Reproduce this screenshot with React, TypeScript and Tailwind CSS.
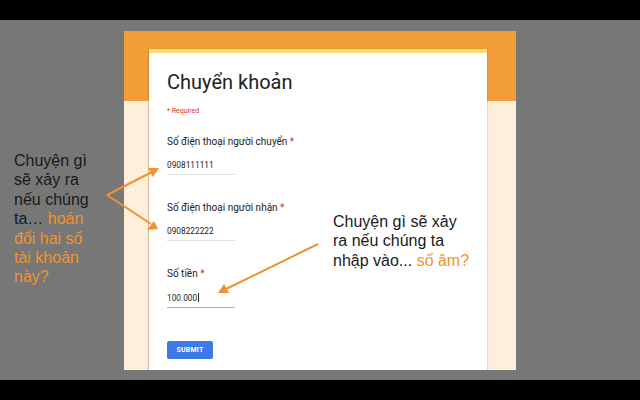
import React from 'react';

const roboto = { fontFamily: 'Roboto, "Noto Sans", sans-serif' };

function Field({ label, value, active }: { label: string; value: string; active?: boolean }) {
  return (
    <div className="flex flex-col">
      <div className="text-[10px] leading-[14px] text-[#202124]">
        {label} <span className="text-[#d93025]">*</span>
      </div>
      <div
        className={
          'mt-[11px] w-[68px] border-b pb-[4px] text-[8.3px] leading-[10px] text-[#202124] ' +
          (active ? 'border-[#e59a92]' : 'border-[#e0e0e0]')
        }
      >
        {value}
        {active && <span className="ml-[1px] inline-block h-[9px] w-px translate-y-[1px] bg-[#333]" />}
      </div>
    </div>
  );
}

export default function App() {
  return (
    <div className="relative flex h-[400px] w-[640px] flex-col bg-black" style={roboto}>
      <div className="h-[20px]" />
      <div className="h-[360px] bg-[#777777] px-[124px] pt-[11px]">
        {/* slide screenshot */}
        <div className="h-[339px] w-[392px] overflow-hidden bg-[linear-gradient(to_bottom,#f29d38_70px,#fdefdc_70px)] pt-[18px]">
          <div className="ml-[25px] h-[321px] w-[338px] border-t-[4px] border-[#fbde73] bg-white shadow-[-1px_0_1px_rgba(160,110,40,0.35),1px_0_1px_rgba(160,110,40,0.2)]">
            <div className="px-[18px] pt-[16px]">
              <h1 className="text-[20px] leading-[26px] text-[#202124]">Chuyển khoản</h1>
              <div className="mt-[12px] text-[7px] leading-[9px] text-[#d93025]">* Required</div>
              <div className="mt-[19px] flex flex-col gap-[26px]">
                <Field label="Số điện thoại người chuyển" value="0908111111" />
                <Field label="Số điện thoại người nhận" value="0908222222" />
                <Field label="Số tiền" value="100.000" active />
              </div>
              <button className="mt-[33px] h-[18px] w-[46px] rounded-[2px] bg-[#3c7ae6] text-[7px] font-bold tracking-wide text-white">
                SUBMIT
              </button>
            </div>
          </div>
        </div>
      </div>
      <div className="flex-1" />

      {/* annotations */}
      <div
        className="absolute left-[14px] top-[151px] w-[78px] text-[16px] leading-[19.4px] text-[#1a1a1a]"
        style={{ fontFamily: '"Liberation Sans", Arial, sans-serif' }}
      >
        Chuyện gì sẽ xảy ra nếu chúng ta… <span className="text-[#f0922e]">hoán đổi hai số tài khoản này?</span>
      </div>
      <div
        className="absolute left-[333px] top-[212px] w-[140px] text-[16px] leading-[19.4px] text-[#1a1a1a]"
        style={{ fontFamily: '"Liberation Sans", Arial, sans-serif' }}
      >
        Chuyện gì sẽ xảy ra nếu chúng ta nhập vào... <span className="text-[#f0922e]">số âm?</span>
      </div>
      <svg className="pointer-events-none absolute left-0 top-0" width="640" height="400">
        <g stroke="#f0922e" strokeWidth="2" fill="none">
          <line x1="107" y1="195" x2="152" y2="172" />
          <line x1="107" y1="195" x2="151" y2="224" />
          <line x1="318" y1="244" x2="226" y2="289" />
        </g>
        <g fill="#f0922e">
          <polygon points="159,168 148,168 153,177" />
          <polygon points="158,229 147,230 154,221" />
          <polygon points="218,293 224,284 229,293" />
        </g>
      </svg>
    </div>
  );
}
